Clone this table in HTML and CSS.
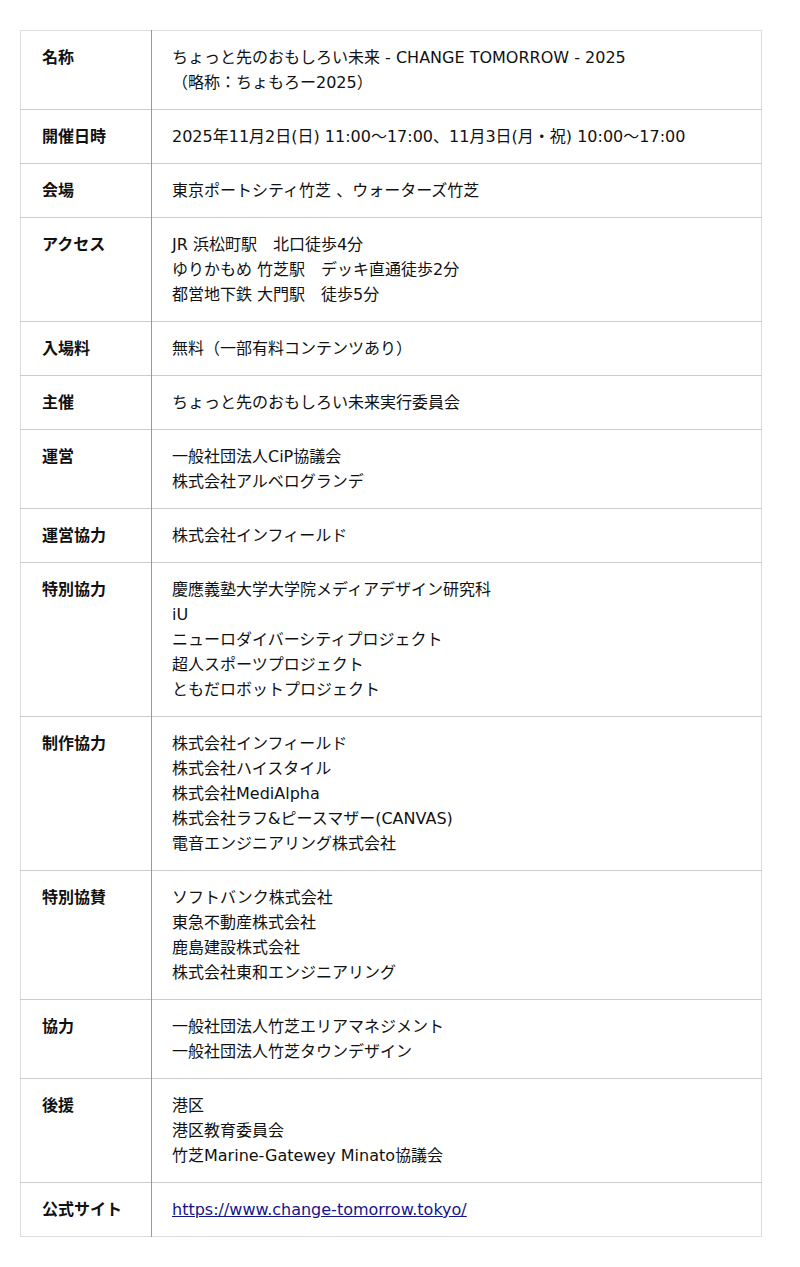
FILE: index.html
```html
<!DOCTYPE html>
<html lang="ja">
<head>
<meta charset="utf-8">
<title>開催概要</title>
<link rel="stylesheet" href="styles.css">
</head>
<body>
<div class="page">
<table class="info">
<tbody>
<tr><th>名称</th><td>ちょっと先のおもしろい未来 - CHANGE TOMORROW - 2025<br>（略称：ちょもろー2025）</td></tr>
<tr><th>開催日時</th><td>2025年11月2日(日) 11:00〜17:00、11月3日(月・祝) 10:00〜17:00</td></tr>
<tr><th>会場</th><td>東京ポートシティ竹芝 、ウォーターズ竹芝</td></tr>
<tr><th>アクセス</th><td>JR 浜松町駅　北口徒歩4分<br>ゆりかもめ 竹芝駅　デッキ直通徒歩2分<br>都営地下鉄 大門駅　徒歩5分</td></tr>
<tr><th>入場料</th><td>無料（一部有料コンテンツあり）</td></tr>
<tr><th>主催</th><td>ちょっと先のおもしろい未来実行委員会</td></tr>
<tr><th>運営</th><td>一般社団法人CiP協議会<br>株式会社アルベログランデ</td></tr>
<tr><th>運営協力</th><td>株式会社インフィールド</td></tr>
<tr><th>特別協力</th><td>慶應義塾大学大学院メディアデザイン研究科<br>iU<br>ニューロダイバーシティプロジェクト<br>超人スポーツプロジェクト<br>ともだロボットプロジェクト</td></tr>
<tr><th>制作協力</th><td>株式会社インフィールド<br>株式会社ハイスタイル<br>株式会社MediAlpha<br>株式会社ラフ&amp;ピースマザー(CANVAS)<br>電音エンジニアリング株式会社</td></tr>
<tr><th>特別協賛</th><td>ソフトバンク株式会社<br>東急不動産株式会社<br>鹿島建設株式会社<br>株式会社東和エンジニアリング</td></tr>
<tr><th>協力</th><td>一般社団法人竹芝エリアマネジメント<br>一般社団法人竹芝タウンデザイン</td></tr>
<tr><th>後援</th><td>港区<br>港区教育委員会<br>竹芝Marine-Gatewey Minato協議会</td></tr>
<tr><th>公式サイト</th><td><a class="link" href="https://www.change-tomorrow.tokyo/">https://www.change-tomorrow.tokyo/</a></td></tr>
</tbody>
</table>
</div>
</body>
</html>
```

FILE: styles.css
```css
html, body {
  margin: 0;
  padding: 0;
  background: #ffffff;
}
.page {
  padding: 30px 38px 30px 20px;
  font-family: "DejaVu Sans", "Noto Sans CJK JP", sans-serif;
  font-size: 16px;
  line-height: 25px;
  color: #111111;
}
.info {
  width: 742px;
  border-collapse: collapse;
  border: 1px solid #dddddd;
}
.info th,
.info td {
  padding: 14px 20px;
  text-align: left;
  vertical-align: top;
  border-top: 1px solid #cccccc;
}
.info tr:first-child th,
.info tr:first-child td {
  border-top: 1px solid #dddddd;
}
.info th {
  width: 89px;
  padding-left: 21px;
  font-weight: bold;
  border-right: 1px solid #999999;
  white-space: nowrap;
}
.info td {
  font-weight: normal;
}
.link {
  color: #14148c;
  text-decoration: underline;
}
```
